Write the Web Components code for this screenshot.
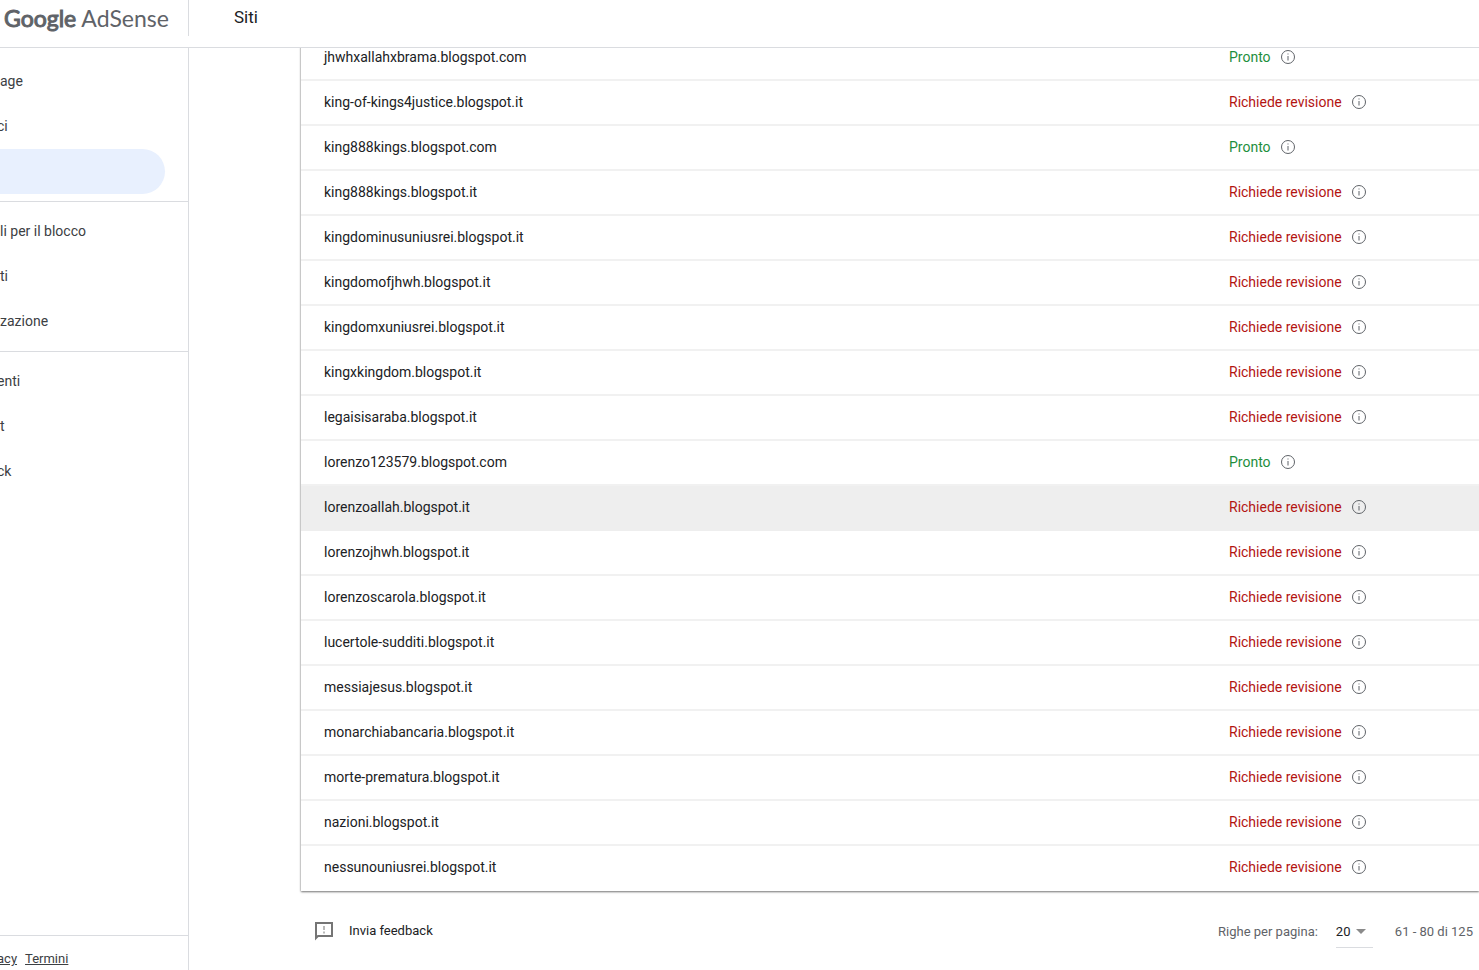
<!DOCTYPE html>
<html lang="it">
<head>
<meta charset="utf-8">
<title>Google AdSense - Siti</title>
<style>
    body {
        margin: 0;
        background: #fff;
        color: #202124;
        font: 14px/20px Roboto, "Liberation Sans", sans-serif;
    }
</style>
</head>
<body>
<adsense-app>
    <app-header slot="header">Siti</app-header>
    <side-nav slot="nav"></side-nav>
    <sites-table></sites-table>
    <table-footer></table-footer>
</adsense-app>

<script>
function attach(el, html) {
    const root = el.attachShadow({ mode: 'open' });
    const template = document.createElement('template');
    template.innerHTML = html;
    root.appendChild(template.content.cloneNode(true));
    return root;
}

class AdsenseApp extends HTMLElement {
    constructor() {
        super();
        attach(this, `
            <style>
                :host {
                    display: flex;
                    flex-direction: column;
                    height: 100vh;
                    overflow: hidden;
                }
                .body {
                    display: flex;
                    flex: 1;
                    min-height: 0;
                }
                main {
                    flex: 1;
                    min-width: 0;
                    overflow: hidden;
                    padding-left: 112px;
                }
            </style>
            <slot name="header"></slot>
            <div class="body">
                <slot name="nav"></slot>
                <main><slot></slot></main>
            </div>
        `);
    }
}

class AppHeader extends HTMLElement {
    constructor() {
        super();
        attach(this, `
            <style>
                :host {
                    display: flex;
                    align-items: flex-start;
                    height: 47px;
                    border-bottom: 1px solid #dadce0;
                }
                .logo {
                    box-sizing: border-box;
                    width: 189px;
                    height: 36px;
                    padding-left: 4px;
                    border-right: 1px solid #dadce0;
                    color: #5f6368;
                    font: 23px/36px Lato, sans-serif;
                    text-decoration: none;
                    white-space: nowrap;
                }
                .logo b {
                    font-weight: 400;
                    -webkit-text-stroke: 1px #5f6368;
                }
                h1 {
                    margin: 0 0 0 45px;
                    font-size: 17px;
                    font-weight: 400;
                    line-height: 34px;
                }
            </style>
            <a class="logo" href="#"><b>Google</b> AdSense</a>
            <h1><slot></slot></h1>
        `);
    }
}

class NavItem extends HTMLElement {
    constructor() {
        super();
        attach(this, `
            <style>
                :host {
                    display: block;
                    margin-right: 23px;
                }
                a {
                    display: block;
                    height: 45px;
                    border-radius: 0 23px 23px 0;
                    color: #3c4043;
                    line-height: 45px;
                    text-decoration: none;
                    white-space: nowrap;
                }
                :host([clipped]) a {
                    text-indent: -3px;
                }
                :host([active]) a {
                    background: #e8f0fe;
                }
            </style>
            <a href="#"><slot></slot></a>
        `);
    }
}

class SideNav extends HTMLElement {
    constructor() {
        super();
        attach(this, `
            <style>
                :host {
                    display: flex;
                    flex-direction: column;
                    box-sizing: border-box;
                    width: 189px;
                    border-right: 1px solid #dadce0;
                    overflow: hidden;
                }
                nav {
                    flex: 1;
                    padding-top: 11px;
                }
                hr {
                    height: 1px;
                    margin: 7px 0;
                    border: 0;
                    background: #dadce0;
                }
                footer {
                    display: flex;
                    gap: 8px;
                    height: 34px;
                    border-top: 1px solid #dadce0;
                    font-size: 13px;
                    line-height: 46px;
                }
                footer a {
                    color: #3c4043;
                }
                footer a:first-child {
                    text-indent: -3px;
                }
            </style>
            <nav>
                <nav-item>age</nav-item>
                <nav-item clipped>ci</nav-item>
                <nav-item active></nav-item>
                <hr>
                <nav-item>li per il blocco</nav-item>
                <nav-item>ti</nav-item>
                <nav-item>zazione</nav-item>
                <hr>
                <nav-item clipped>enti</nav-item>
                <nav-item>t</nav-item>
                <nav-item clipped>ck</nav-item>
            </nav>
            <footer><a href="#">acy</a><a href="#">Termini</a></footer>
        `);
    }
}

class SiteStatus extends HTMLElement {
    constructor() {
        super();
        attach(this, `
            <style>
                :host {
                    display: flex;
                    align-items: center;
                    gap: 9px;
                    color: #b31412;
                }
                :host([ready]) {
                    color: #1e8e3e;
                }
                button {
                    display: flex;
                    padding: 0;
                    border: 0;
                    background: none;
                }
                svg {
                    width: 16px;
                    height: 16px;
                    fill: none;
                    stroke: #5f6368;
                }
            </style>
            <slot></slot>
            <button type="button" aria-label="Info">
                <svg viewBox="0 0 16 16"><circle cx="8" cy="8" r="6.5"/><path d="M8 4.5v1M8 7v4.5"/></svg>
            </button>
        `);
    }
}

const SITES = [
    ['jhwhxallahxbrama.blogspot.com', true],
    ['king-of-kings4justice.blogspot.it'],
    ['king888kings.blogspot.com', true],
    ['king888kings.blogspot.it'],
    ['kingdominusuniusrei.blogspot.it'],
    ['kingdomofjhwh.blogspot.it'],
    ['kingdomxuniusrei.blogspot.it'],
    ['kingxkingdom.blogspot.it'],
    ['legaisisaraba.blogspot.it'],
    ['lorenzo123579.blogspot.com', true],
    ['lorenzoallah.blogspot.it'],
    ['lorenzojhwh.blogspot.it'],
    ['lorenzoscarola.blogspot.it'],
    ['lucertole-sudditi.blogspot.it'],
    ['messiajesus.blogspot.it'],
    ['monarchiabancaria.blogspot.it'],
    ['morte-prematura.blogspot.it'],
    ['nazioni.blogspot.it'],
    ['nessunouniusrei.blogspot.it']
];
const HOVERED = 'lorenzoallah.blogspot.it';

class SitesTable extends HTMLElement {
    constructor() {
        super();
        const rows = SITES.map(([name, ready]) => `
            <tr class="${name === HOVERED ? 'hovered' : ''}">
                <td>${name}</td>
                <td class="status">
                    <site-status ${ready ? 'ready' : ''}>${ready ? 'Pronto' : 'Richiede revisione'}</site-status>
                </td>
            </tr>`).join('');
        attach(this, `
            <style>
                /* the list is scrolled: its first row slides under the header */
                :host {
                    display: block;
                    margin-top: -12px;
                    box-shadow: 0 1px 2px rgba(0, 0, 0, .5), 0 0 2px rgba(0, 0, 0, .2);
                }
                table {
                    width: 100%;
                    border-collapse: collapse;
                    table-layout: fixed;
                }
                tr {
                    height: 45px;
                }
                td {
                    box-sizing: border-box;
                    height: 45px;
                    padding: 0 0 4px 23px;
                    box-shadow: inset 0 -2px #f1f1f1;
                }
                tr:last-child td {
                    box-shadow: none;
                }
                .hovered td {
                    background: #eee;
                    box-shadow: none;
                }
                .status {
                    width: 250px;
                    padding-left: 0;
                }
            </style>
            <table><tbody>${rows}</tbody></table>
        `);
    }
}

class TableFooter extends HTMLElement {
    constructor() {
        super();
        attach(this, `
            <style>
                :host {
                    display: flex;
                    align-items: center;
                    justify-content: space-between;
                    height: 80px;
                    padding: 0 6px 0 13px;
                    color: #5f6368;
                    font-size: 13px;
                }
                .feedback {
                    display: flex;
                    align-items: center;
                    gap: 15px;
                    padding: 0;
                    border: 0;
                    background: none;
                    color: #202124;
                    font: inherit;
                }
                .feedback svg {
                    width: 20px;
                    height: 20px;
                    fill: none;
                    stroke: #757575;
                    stroke-width: 2;
                }
                .pager {
                    display: flex;
                    align-items: center;
                    padding-top: 2px;
                }
                .size {
                    display: grid;
                    align-items: center;
                    width: 37px;
                    height: 31px;
                    margin: 0 22px 0 18px;
                    border-bottom: 1px solid #dadce0;
                }
                select, .size svg {
                    grid-area: 1 / 1;
                }
                select {
                    appearance: none;
                    width: 100%;
                    padding: 0;
                    border: 0;
                    background: none;
                    color: #202124;
                    font: inherit;
                }
                .size svg {
                    justify-self: end;
                    width: 10px;
                    height: 5px;
                    margin-right: 7px;
                    fill: #8a8a8a;
                    pointer-events: none;
                }
            </style>
            <button class="feedback" type="button">
                <svg viewBox="0 0 20 20"><path d="M2 17V2h16v13H4z"/><path d="M10 5v4M10 10.500v2" stroke-width="1"/></svg>
                Invia feedback
            </button>
            <div class="pager">
                <label for="size">Righe per pagina:</label>
                <div class="size">
                    <select id="size"><option>20</option></select>
                    <svg viewBox="0 0 10 5"><path d="M0 0h10L5 5z"/></svg>
                </div>
                <span>61 - 80 di 125</span>
            </div>
        `);
    }
}

customElements.define('adsense-app', AdsenseApp);
customElements.define('app-header', AppHeader);
customElements.define('nav-item', NavItem);
customElements.define('side-nav', SideNav);
customElements.define('site-status', SiteStatus);
customElements.define('sites-table', SitesTable);
customElements.define('table-footer', TableFooter);
</script>
</body>
</html>
